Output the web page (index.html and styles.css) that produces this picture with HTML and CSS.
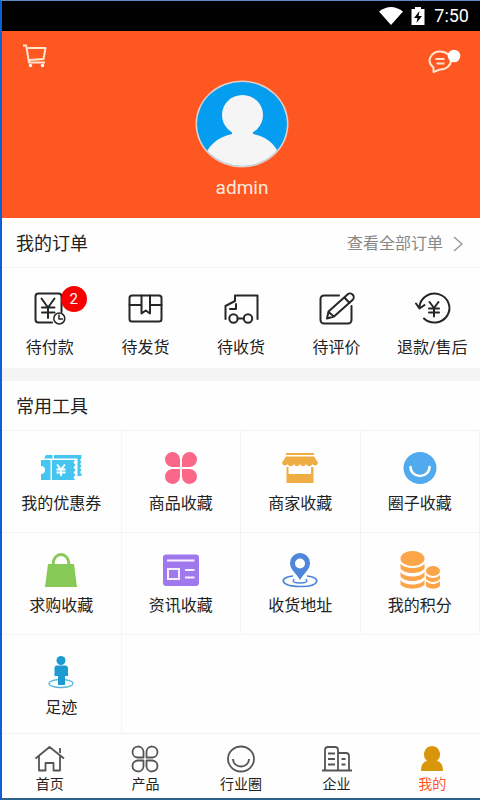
FILE: index.html
```html
<!DOCTYPE html>
<html lang="zh-CN">
<head>
<meta charset="utf-8">
<meta name="viewport" content="width=device-width, initial-scale=1">
<title>我的</title>
<link rel="stylesheet" href="styles.css">
</head>
<body>
<div class="status">
  <svg class="status-wifi" viewBox="0 0 24 18" aria-hidden="true"><path d="M0 4.500Q12-4.500 24 4.500L12 18Z"/></svg>
  <svg class="status-battery" viewBox="0 0 14 18" aria-hidden="true"><path d="M4 0h6v2h3.500v16H.500V2H4Z"/><path class="bolt" d="M8.500 4 3 11h3.500L5.500 16 11 9H7.500Z"/></svg>
  <time>7:50</time>
</div>

<header class="profile">
  <button class="icon-button" type="button" aria-label="购物车">
    <svg class="cart" viewBox="0 0 26 26" aria-hidden="true"><path d="M1 2.500h3.200L7 19.500h16M6 5h17.500l-2 11L7.500 17"/><circle cx="8.500" cy="22.500" r="1.700"/><circle cx="20.500" cy="22.500" r="1.700"/></svg>
  </button>
  <div class="user">
    <svg class="avatar" viewBox="0 0 94 88" aria-hidden="true">
      <defs><clipPath id="face"><ellipse cx="47" cy="44" rx="45" ry="42"/></clipPath></defs>
      <ellipse cx="47" cy="44" rx="46.500" ry="43.500" fill="#e3cdc6"/>
      <g clip-path="url(#face)"><path fill="#049df0" d="M0 0h94v88H0z"/><path fill="#f5f5f5" d="M37 50h21v4C74 57 83 67 86 80V88H8V80C12 67 22 57 37 54Z"/><ellipse cx="47.500" cy="35" rx="20.500" ry="20"/></g>
    </svg>
    <span class="user-name">admin</span>
  </div>
  <button class="icon-button" type="button" aria-label="消息">
    <svg class="message" viewBox="0 0 36 28" aria-hidden="true"><path d="M7.500 24V19.500C-1 12.500 6 3.500 14 3.500 21 3.500 25 8 25 12.500S20.500 21.500 14 21.500Z"/><path d="M9.500 11h9M10.500 15.500h8"/><circle cx="28" cy="8" r="6.300"/></svg>
  </button>
</header>

<main>
  <section>
    <div class="heading">
      <h2>我的订单</h2>
      <a class="all-orders" href="#orders">查看全部订单
        <svg viewBox="0 0 10 16" aria-hidden="true"><path d="M1 1l8 7-8 7"/></svg></a>
    </div>
    <nav class="orders" id="orders" aria-label="我的订单">
      <a href="#pay"><span class="order-icon">
        <svg viewBox="0 0 48 40" aria-hidden="true"><path d="M26 34.500H12.500a3 3 0 0 1-3-3V8.500a3 3 0 0 1 3-3h20a3 3 0 0 1 3 3V24M15.500 10.500l6.500 9 6.500-9M16 19.500h12.500M16 24.500h12.500M22 19.500V30"/><g class="fine"><circle cx="33.300" cy="30.500" r="5.500"/><path d="M33 27v4h3.500"/></g></svg>
        <span class="badge">2</span></span>待付款</a>
      <a href="#ship"><svg viewBox="0 0 48 40" aria-hidden="true"><rect x="8.500" y="7.500" width="32" height="26" rx="2.500"/><path d="M8.500 17H20.500M29 17h11.500M20.500 7.500v18l4.250-3 4.250 3v-18"/></svg>待发货</a>
      <a href="#receive"><svg viewBox="0 0 48 40" aria-hidden="true"><path d="M8.500 31V18L18 13V7.500h22.500V31M13 21h6v-5M20.500 30.500h6"/><circle cx="16.500" cy="30.500" r="4.200"/><circle cx="31" cy="30.500" r="4.200"/></svg>待收货</a>
      <a href="#review"><svg viewBox="0 0 48 40" aria-hidden="true"><path d="M26 7.500H11a3.500 3.500 0 0 0-3.500 3.500V32a3.500 3.500 0 0 0 3.500 3.500H35a3.500 3.500 0 0 0 3.500-3.500V18M14 30.500l1.500-7L34.500 6.500a3.400 3.400 0 0 1 5 5.500L21 28.500ZM31.500 9.500l5 5.500M15.500 24l5.500 4.500"/></svg>待评价</a>
      <a href="#refund"><svg viewBox="0 0 48 40" aria-hidden="true"><path d="M16 30.500A15 14.500 0 1 0 11.500 18.500M8 15.500l3.500 5 5-3.500M21.500 14l4.500 6 4.500-6M21 20.500h10M21 24.500h10M26 20v8.500"/></svg>退款/售后</a>
    </nav>
  </section>

  <section class="tools-section">
    <div class="heading"><h2>常用工具</h2></div>
    <nav class="tools" aria-label="常用工具">
      <a href="#coupons"><svg viewBox="0 0 48 40" aria-hidden="true"><g fill="#46c5f0"><path d="M9 7h6.500v3.500H7ZM17 7H44.500v3l-1.500 2 1.500 2-1.500 2 1.500 2-1.500 2 1.500 2-1.500 2 1.500 2V28h-4V10.500H17Z"/><path d="M4 12h9.500v20H4V26a4 4 0 0 0 0-8ZM15 12h23l-1.500 2.500 2 2.500-2 2.500 2 2.500-2 2.500 2 2.500-2 2.500 1.500 2.500H15Z"/></g><path d="M20 16.500l4 5 4-5M19.500 21.500h9M19.500 24.500h9M24 21v7" fill="none" stroke="#fff" stroke-width="1.800"/></svg>我的优惠券</a>
      <a href="#goods"><svg viewBox="0 0 48 40" aria-hidden="true"><g fill="#fb6788"><path d="M23 19H15a7.500 7.500 0 1 1 8-8ZM25 19h8a7.500 7.500 0 1 0-8-8ZM23 21H15a7.500 7.500 0 1 0 8 8ZM25 21h8a7.500 7.500 0 1 1-8 8Z"/></g></svg>商品收藏</a>
      <a href="#shops"><svg viewBox="0 0 48 40" aria-hidden="true"><path fill="#efae43" d="M10 5h28v2H10ZM10 8.500h28l4 6c0 3-4 4-5.500 1.500-1.500 3-5 3-6.500 0-1.500 3-4.500 3-6 0-1.500 3-4.500 3-6 0-1.500 3-5 3-6.500 0C10 18.500 6 17.500 6 14.500ZM10.500 19h2v7h22.500v-7h2.500v16h-27Z"/></svg>商家收藏</a>
      <a href="#circles"><svg viewBox="0 0 48 40" aria-hidden="true"><ellipse cx="24" cy="20" rx="16.500" ry="16" fill="#51aaee"/><path d="M14.500 19a9.500 9 0 0 0 19 0" fill="none" stroke="#fff" stroke-width="2.500" stroke-linecap="round"/></svg>圈子收藏</a>
      <a href="#requests"><svg viewBox="0 0 48 40" aria-hidden="true"><path fill="#87ca57" d="M11 14h26l3 23H8Z"/><path d="M16 15c0-14 16-14 16 0" fill="none" stroke="#87ca57" stroke-width="2.800"/></svg>求购收藏</a>
      <a href="#news"><svg viewBox="0 0 48 40" aria-hidden="true"><rect x="6" y="4.500" width="36" height="31.500" rx="3" fill="#a078ee"/><path d="M10 10.500h27.500M28 20h9.500M28 27.500h9.500M11 19h11v10H11Z" fill="none" stroke="#f5efff" stroke-width="2"/></svg>资讯收藏</a>
      <a href="#address"><svg viewBox="0 0 48 40" aria-hidden="true"><g fill="none" stroke="#4d86da"><path d="M17 26C3 27 3 36 24 36.500S45 27 31 26" stroke-width="1.700"/><path d="M18.500 29c-4 3 1 4 5.500 4s9.500-1 5.500-4" stroke-width="1.300"/></g><path fill="#4d86da" fill-rule="evenodd" d="M24 30C20 23 14 19.500 14 13a10 10 0 0 1 20 0c0 6.500-6 10-10 17ZM24 8.500a5 5 0 1 0 0 10 5 5 0 0 0 0-10Z"/></svg>收货地址</a>
      <a href="#points"><svg viewBox="0 0 48 40" aria-hidden="true"><g fill="#fba448"><ellipse cx="16.500" cy="8.500" rx="12" ry="7.500"/><path d="M4.500 13.500c4 6 20 6 24 0V18.500c-4 6-20 6-24 0ZM4.500 22c4 6 20 6 24 0V26.500c-4 6-20 6-24 0ZM4.500 30c4 6 20 6 24 0V34.500c-4 5.500-20 5.500-24 0Z"/><ellipse cx="37" cy="21" rx="7" ry="5"/><path d="M30 25c3 4 11 4 14 0v4c-3 4-11 4-14 0ZM30 31c3 4 11 4 14 0v5c-3 3.500-11 3.500-14 0Z"/></g></svg>我的积分</a>
      <a href="#footprints"><svg viewBox="0 0 48 40" aria-hidden="true"><ellipse cx="24" cy="31.500" rx="12" ry="4" fill="none" stroke="#5ab7df" stroke-width="1.300"/><g fill="#1c9bd2"><circle cx="24" cy="8.500" r="4.500"/><path d="M20 13.500h8q3 0 3 3V24h-3v9h-7V24h-3.500v-7.500q0-3 2.500-3Z"/></g></svg>足迹</a>
    </nav>
  </section>
</main>

<nav class="tabs" aria-label="主导航">
  <a href="#home"><svg viewBox="0 0 36 30" aria-hidden="true"><path d="M3.500 14.500 17.500 3 32 14.500M28 9V4M7 12v14.500h6.500V19h8v7.500H28V12"/></svg>首页</a>
  <a href="#products"><svg viewBox="0 0 36 30" aria-hidden="true"><path d="M16.500 13.500h-6a5.500 5.500 0 1 1 6-6ZM19.500 13.500h6a5.500 5.500 0 1 0-6-6ZM16.500 16.500h-6a5.500 5.500 0 1 0 6 6ZM19.500 16.500h6a5.500 5.500 0 1 1-6 6Z"/></svg>产品</a>
  <a href="#industry"><svg viewBox="0 0 36 30" aria-hidden="true"><ellipse cx="18" cy="15" rx="13" ry="12.500"/><path d="M10 15a8 7.500 0 0 0 16 0"/></svg>行业圈</a>
  <a href="#companies"><svg viewBox="0 0 36 30" aria-hidden="true"><path d="M3 26.500h30M6 26V6q0-3 3-3h7q3 0 3 3v20M19 9h8q3 0 3 3v14M9 9.500h7M9 15h7M9 20.500h7M22.500 15h4M22.500 20.500h4"/></svg>企业</a>
  <a class="current" href="#me" aria-current="page"><svg viewBox="0 0 36 30" aria-hidden="true"><path d="M18 2a8.500 8.500 0 0 1 5 15c4 1 6 4 6 10H7c0-6 2-9 6-10A8.500 8.500 0 0 1 18 2Z"/></svg>我的</a>
</nav>
</body>
</html>
```
FILE: styles.css
```css
* { box-sizing: border-box; }

body {
  display: flex;
  flex-direction: column;
  min-height: 100vh;
  margin: 0;
  border: solid #0d5fd3;
  border-width: 1px 0 0 2px;
  border-top-color: #5b8cc4;
  border-bottom: 2px solid #2f6288;
  background: #fefefe;
  color: #222;
  font: 16px/20px Roboto, "Noto Sans CJK SC", sans-serif;
}

a { color: inherit; text-decoration: none; }
svg { display: block; }

.status {
  display: flex;
  align-items: center;
  justify-content: flex-end;
  height: 30px;
  padding-right: 11px;
  background: #000;
  color: #fff;
  font-size: 18px;
}
.status svg { height: 18px; fill: #fff; }
.status-wifi { width: 24px; margin-right: 8px; }
.status-battery { width: 14px; margin-right: 9px; }
.status .bolt { fill: #000; }

.profile {
  display: flex;
  align-items: flex-start;
  justify-content: space-between;
  height: 187px;
  padding: 12px 18px 0 20px;
  background: #ff5722;
}
.icon-button {
  display: flex;
  width: 36px;
  padding: 0;
  border: 0;
  background: none;
}
.icon-button svg {
  fill: none;
  stroke: #ffe6cf;
  stroke-width: 2;
  stroke-linejoin: round;
}
.icon-button circle { fill: #fff; stroke: none; }
.cart { width: 26px; }
.message { width: 36px; margin-top: 5px; }
.user { padding-top: 37px; text-align: center; }
.avatar { width: 94px; }
.avatar ellipse:last-child { fill: #f5f5f5; }
.user-name {
  display: block;
  margin-top: 8px;
  color: #ffe9dc;
  font-size: 19px;
  line-height: 24px;
}

main { display: flex; flex: 1; flex-direction: column; }
.heading {
  display: flex;
  align-items: center;
  justify-content: space-between;
  height: 50px;
  padding: 2px 17px 0 14px;
  border-bottom: 1px solid #f4f4f4;
}
h2 { margin: 0; font-size: 18px; font-weight: 400; }
.all-orders { display: flex; align-items: center; gap: 10px; color: #888; }
.all-orders svg { width: 10px; fill: none; stroke: #999; stroke-width: 1.5; }

.orders { display: grid; grid-template-columns: repeat(5, 1fr); }
.orders a, .tools a, .tabs a {
  display: flex;
  flex-direction: column;
  align-items: center;
  white-space: nowrap;
}
.orders a { gap: 10px; padding: 20px 0 10px; }
.orders svg {
  width: 48px;
  fill: none;
  stroke: #262626;
  stroke-width: 2;
  stroke-linecap: round;
  stroke-linejoin: round;
}
.orders .fine { fill: #fefefe; stroke-width: 1.5; }
.order-icon { position: relative; }
.badge {
  position: absolute;
  top: -2px;
  right: -13px;
  width: 26px;
  border-radius: 13px;
  background: #f80000;
  color: #fff;
  font-size: 15px;
  line-height: 26px;
  text-align: center;
}

.tools-section {
  display: flex;
  flex: 1;
  flex-direction: column;
  border-top: 13px solid #f4f4f4;
}
.tools {
  display: grid;
  flex: 1;
  grid-template-columns: repeat(4, 1fr);
  grid-template-rows: 102px 102px 1fr;
}
.tools a {
  gap: 6px;
  padding-top: 17px;
  border: solid #f4f4f4;
  border-width: 0 1px 1px 0;
}
.tools a:last-child { border-bottom: 0; }
.tools svg { width: 48px; }

.tabs {
  display: grid;
  grid-template-columns: repeat(5, 1fr);
  border-top: 1px solid #f1f1f1;
  font-size: 14px;
}
.tabs a { padding: 10px 0 4px; }
.tabs svg {
  width: 36px;
  fill: none;
  stroke: #555;
  stroke-width: 1.8;
  stroke-linejoin: round;
}
.tabs .current { color: #ff5722; }
.tabs .current svg { fill: #d9960a; stroke: none; }
```
